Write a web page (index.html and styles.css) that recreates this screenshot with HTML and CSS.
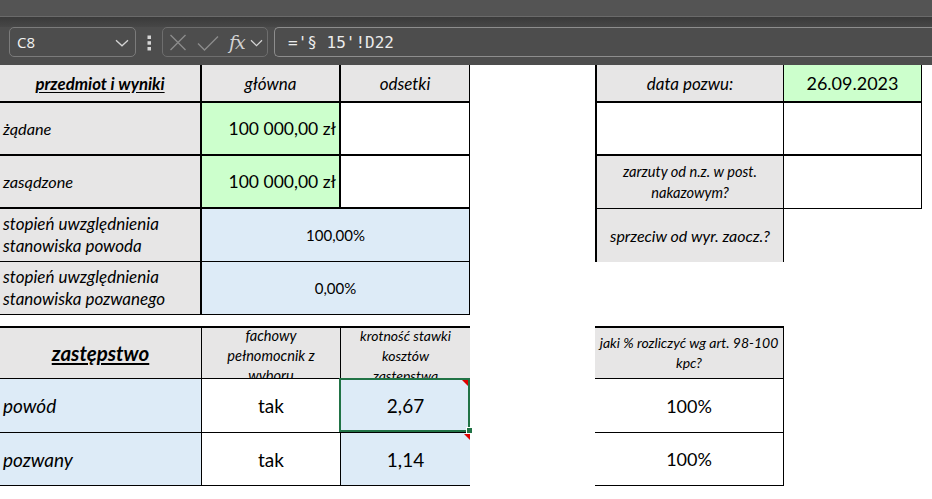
FILE: index.html
```html
<!DOCTYPE html>
<html lang="pl">
<head>
<meta charset="utf-8">
<title>Arkusz</title>
<link rel="stylesheet" href="styles.css">
</head>
<body>
<div class="app">
  <div class="top"></div>
  <div class="band"></div>
  <div class="fbar">
    <div class="namebox">
      <span class="nbtext">C8</span>
      <svg class="chev" width="14" height="8" viewBox="0 0 14 8"><path d="M1 1.2 L7 6.8 L13 1.2" fill="none" stroke="#d4d4d4" stroke-width="1.3"/></svg>
    </div>
    <svg class="dots" width="5" height="16" viewBox="0 0 5 16"><rect x="0.5" y="0.5" width="3.5" height="3.5" fill="#d6d6d6"/><rect x="0.5" y="6.2" width="3.5" height="3.5" fill="#d6d6d6"/><rect x="0.5" y="12" width="3.5" height="3.5" fill="#d6d6d6"/></svg>
    <div class="fxgroup">
      <svg class="ico-x" width="18" height="17" viewBox="0 0 18 17"><path d="M1.5 1 L16.5 16 M16.5 1 L1.5 16" fill="none" stroke="#8b8b8b" stroke-width="1.4"/></svg>
      <svg class="ico-ok" width="22" height="16" viewBox="0 0 22 16"><path d="M1 8.5 L7.5 15 L21 1.5" fill="none" stroke="#8b8b8b" stroke-width="1.4"/></svg>
      <span class="fx">fx</span>
      <svg class="chev2" width="13" height="8" viewBox="0 0 13 8"><path d="M1 1.2 L6.5 6.6 L12 1.2" fill="none" stroke="#d4d4d4" stroke-width="1.2"/></svg>
    </div>
    <div class="formula">='§ 15'!D22</div>
  </div>
  <div class="sheet">
    <!-- row 1 -->
    <div class="c gray br2 bb2 center hdr-b"><span class="u">przedmiot i wyniki</span></div>
    <div class="c gray br2 bb2 center hdr">główna</div>
    <div class="c gray br1 bb2 center hdr">odsetki</div>
    <div class="c"></div>
    <div class="c gray bl2 br1 bb2 center hdr">data pozwu:</div>
    <div class="c green br1 bb2 center big">26.09.2023</div>
    <div class="c"></div>
    <!-- row 2 -->
    <div class="c gray br2 bb2 lbl">żądane</div>
    <div class="c green br2 bb2 right amt">100 000,00 zł</div>
    <div class="c br1 bb2"></div>
    <div class="c"></div>
    <div class="c bl2 br1 bb2"></div>
    <div class="c br1 bb2"></div>
    <div class="c"></div>
    <!-- row 3 -->
    <div class="c gray br2 bb2 lbl">zasądzone</div>
    <div class="c green br2 bb2 right amt">100 000,00 zł</div>
    <div class="c br1 bb2"></div>
    <div class="c"></div>
    <div class="c gray bl2 br1 bb1 center small2 l21">zarzuty od n.z. w post.<br>nakazowym?</div>
    <div class="c br1 bb1"></div>
    <div class="c"></div>
    <!-- row 4 -->
    <div class="c gray br2 bb1 lbl2">stopień uwzględnienia<br>stanowiska powoda</div>
    <div class="c blue br1 bb1 center pct span2">100,00%</div>
    <div class="c"></div>
    <div class="c gray bl2 br1 center mid">sprzeciw od wyr. zaocz.?</div>
    <div class="c"></div>
    <div class="c"></div>
    <!-- row 5 -->
    <div class="c gray br2 bb1 lbl2">stopień uwzględnienia<br>stanowiska pozwanego</div>
    <div class="c blue br1 bb1 center pct span2">0,00%</div>
    <div class="c"></div>
    <div class="c"></div>
    <div class="c"></div>
    <div class="c"></div>
    <!-- row 6 -->
    <div class="c spanall"></div>
    <!-- row 7 -->
    <div class="c gray bt2 br1 bb1 center hdr-z"><span class="u">zastępstwo</span></div>
    <div class="c gray bt2 br1 bb1 center small2 clip"><span class="cl">fachowy<br>pełnomocnik z<br>wyboru</span></div>
    <div class="c gray bt2 bb1 center small clip"><span class="cl">krotność stawki<br>kosztów<br>zastępstwa</span></div>
    <div class="c"></div>
    <div class="c gray bt2 br1 bb1 center small l20">jaki % rozliczyć wg art. 98-100<br>kpc?</div>
    <div class="c"></div>
    <div class="c"></div>
    <!-- row 8 -->
    <div class="c blue br1 bb1 lbl3">powód</div>
    <div class="c br1 bb1 center val">tak</div>
    <div class="c blue bb1 center val active">2,67<span class="selbox"></span><span class="tri tri-a"></span><span class="handle"></span></div>
    <div class="c"></div>
    <div class="c br1 bb1 center val2">100%</div>
    <div class="c"></div>
    <div class="c"></div>
    <!-- row 9 -->
    <div class="c blue br1 bb1 lbl3">pozwany</div>
    <div class="c br1 bb1 center val">tak</div>
    <div class="c blue bb1 center val">1,14<span class="tri tri-b"></span></div>
    <div class="c"></div>
    <div class="c br1 bb1 center val2">100%</div>
    <div class="c"></div>
    <div class="c"></div>
    <!-- rest -->
    <div class="c spanall"></div>
  </div>
</div>
</body>
</html>
```
FILE: styles.css
```css
html, body {
  margin: 0;
  padding: 0;
  background: #ffffff;
}
body {
  width: 932px;
  height: 499px;
  overflow: hidden;
}
.app {
  width: 932px;
  height: 499px;
  display: flex;
  flex-direction: column;
}
.top {
  height: 16px;
  background: #545454;
  border-bottom: 1px solid #6a6a6a;
}
.band {
  height: 10px;
  background: linear-gradient(#3a3a3a, #474747);
}
.fbar {
  height: 38px;
  background: #4d4d4d;
  display: flex;
  align-items: flex-start;
  padding-left: 9px;
  box-sizing: border-box;
}
.namebox {
  width: 127px;
  height: 30px;
  box-sizing: border-box;
  border: 1px solid #7b7b7b;
  border-radius: 5px;
  display: flex;
  align-items: center;
  justify-content: space-between;
  padding: 0 6px 0 7px;
}
.nbtext {
  font-family: "Open Sans", "Noto Sans", sans-serif;
  font-size: 15px;
  color: #f2f2f2;
}
.chev {
  margin-top: 2px;
}
.dots {
  margin: 8px 0 0 11px;
}
.fxgroup {
  margin-left: 10px;
  width: 106px;
  height: 30px;
  box-sizing: border-box;
  border: 1px solid #6e6e6e;
  border-radius: 5px;
  display: flex;
  align-items: center;
  padding-left: 6px;
}
.ico-x {
  margin-top: 1px;
}
.ico-ok {
  margin-left: 10px;
  margin-top: 1px;
}
.fx {
  margin-left: 10px;
  font-family: "DejaVu Serif", "Liberation Serif", serif;
  font-style: italic;
  font-size: 19px;
  color: #d2d2d2;
  letter-spacing: -1px;
}
.chev2 {
  margin-left: 5px;
  margin-top: 1px;
}
.formula {
  flex: 1;
  margin-left: 6px;
  height: 30px;
  box-sizing: border-box;
  border: 1px solid #8d8d8d;
  border-right: none;
  border-radius: 5px 0 0 5px;
  padding-left: 13px;
  display: flex;
  align-items: center;
  font-family: "DejaVu Sans Mono", "Liberation Mono", monospace;
  font-size: 16px;
  color: #ececec;
}

/* sheet */
.sheet {
  flex: 1;
  display: grid;
  grid-template-columns: 202px 139px 129px 125px 189px 138px 1fr;
  grid-template-rows: 38px 53px 53px 53px 53px 11px 53px 54px 53px 1fr;
  background: #ffffff;
}
.c {
  box-sizing: border-box;
  display: flex;
  align-items: center;
  overflow: hidden;
  padding: 0 3px;
  font-family: Lato, "Open Sans", sans-serif;
  color: #000000;
  white-space: nowrap;
  position: relative;
}
.gray { background: #e7e6e6; }
.green { background: #ccffcc; }
.blue { background: #ddebf7; }
.center { justify-content: center; text-align: center; }
.right { justify-content: flex-end; }
.br2 { border-right: 2px solid #000; }
.br1 { border-right: 1px solid #000; }
.bb2 { border-bottom: 2px solid #000; }
.bb1 { border-bottom: 1px solid #000; }
.bl2 { border-left: 2px solid #000; }
.bt2 { border-top: 2px solid #000; }
.span2 { grid-column: span 2; }
.spanall { grid-column: 1 / -1; }

.u { text-decoration: underline; text-underline-offset: 2px; }
.hdr { font-style: italic; font-size: 17px; }
.hdr-b { font-style: italic; font-weight: bold; font-size: 16.8px; }
.hdr-z { font-style: italic; font-weight: bold; font-size: 20.5px; }
.lbl { font-style: italic; font-size: 16.3px; }
.lbl2 { font-style: italic; font-size: 17px; line-height: 22px; }
.lbl3 { font-style: italic; font-size: 19px; }
.big { font-size: 18px; }
.amt { font-size: 17.5px; }
.pct { font-size: 15px; }
.val { font-size: 19px; }
.val2 { font-size: 18px; }
.mid { font-style: italic; font-size: 16px; }
.small { font-style: italic; font-size: 14px; }
.small2 { font-style: italic; font-size: 14.6px; }
.l21 { line-height: 21px; }
.l20 { line-height: 20px; }
.clip { align-items: flex-start; line-height: 20px; }
.cl { margin-top: -2px; }

.active {
  overflow: visible;
  z-index: 2;
}
.selbox {
  position: absolute;
  left: -2px;
  top: -1px;
  right: 0;
  bottom: 0;
  border: 2px solid #217346;
}
.handle {
  position: absolute;
  right: -3px;
  bottom: -2px;
  width: 5px;
  height: 5px;
  background: #217346;
  border: 1px solid #ffffff;
}
.tri {
  position: absolute;
  width: 0;
  height: 0;
  border-top: 6px solid #e00000;
  border-left: 6px solid transparent;
}
.tri-a { top: 1px; right: 2px; }
.tri-b { top: 1px; right: 0; }
```
